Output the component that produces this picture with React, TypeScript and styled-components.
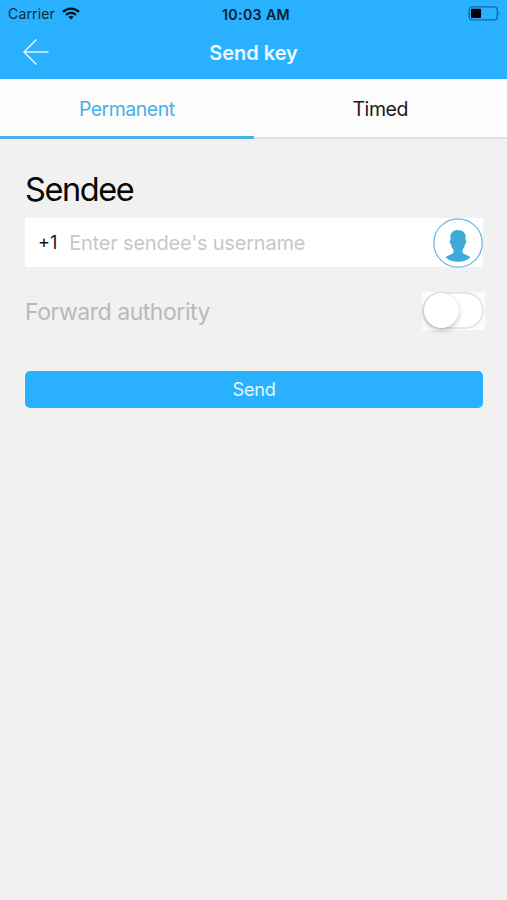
import React from "react";
import styled, { createGlobalStyle } from "styled-components";

const Global = createGlobalStyle`
  * { box-sizing: border-box; }
  body { margin: 0; background: #f1f1f1; }
  button { border: 0; padding: 0; background: none; font: inherit; }
`;

const Screen = styled.div`
  width: 507px;
  height: 900px;
  display: flex;
  flex-direction: column;
  overflow: hidden;
  background: #f1f1f1;
  font-family: Inter, "Liberation Sans", sans-serif;
`;

const Label = styled.span<{ $size: number; $track?: number; $weight?: number; $color?: string }>`
  font-size: ${(p) => p.$size}px;
  letter-spacing: ${(p) => p.$track ?? 0}px;
  font-weight: ${(p) => p.$weight ?? 400};
  color: ${(p) => p.$color ?? "#080808"};
  white-space: nowrap;
`;

const Header = styled.header`
  flex: none;
  height: 79px;
  background: #29b1ff;
`;

const StatusBar = styled.div`
  height: 27px;
  padding: 0 6px 0 8px;
  display: grid;
  grid-template-columns: 1fr auto 1fr;
  align-items: center;
`;

const Clock = styled.div`
  padding-left: 3px;
`;

const Carrier = styled.div`
  display: flex;
  align-items: center;
  gap: 7px;
`;

const Battery = styled.svg`
  justify-self: end;
`;

const NavBar = styled.div`
  height: 52px;
  padding: 0 22px;
  display: grid;
  grid-template-columns: 1fr auto 1fr;
  align-items: center;
`;

const BackButton = styled.button`
  display: flex;
  justify-self: start;
  padding-bottom: 2px;
`;

const Tabs = styled.nav`
  flex: none;
  height: 60px;
  display: flex;
  background: linear-gradient(#fcfcfc 58px, #e4e4e4 58px);
`;

const Tab = styled.button<{ $active?: boolean }>`
  flex: 1;
  height: 60px;
  display: flex;
  align-items: center;
  justify-content: center;
  padding-top: 2px;
  border-bottom: 3px solid ${(p) => (p.$active ? "#4db1e8" : "transparent")};
`;

const Form = styled.main`
  padding: 31px 24px 0 25px;
  display: flex;
  flex-direction: column;
`;

const Title = styled.h1`
  margin: 0;
  height: 48px;
  line-height: 40px;
  font-weight: 400;
`;

const Field = styled.div`
  height: 49px;
  padding-left: 13px;
  display: flex;
  align-items: center;
  background: #fff;
`;

const Placeholder = styled.div`
  flex: 1;
  margin-left: 12px;
`;

const AuthorityRow = styled.div`
  height: 38px;
  margin: 25px -2px 0 0;
  display: flex;
  align-items: center;
  justify-content: space-between;
`;

const AuthorityText = styled.div`
  padding-top: 2px;
`;

const SwitchBacking = styled.div`
  width: 63px;
  height: 38px;
  background: #fcfcfc;
`;

const Switch = styled.button`
  display: block;
  width: 62px;
  height: 37px;
  border: 2px solid #e6e6e6;
  border-radius: 19px;
  background: #fff;
`;

const Knob = styled.span`
  display: block;
  width: 35px;
  height: 35px;
  margin-top: -1px;
  border-radius: 50%;
  background: #fff;
  box-shadow: 0 3px 5px rgba(0, 0, 0, 0.18), 0 0 2px rgba(0, 0, 0, 0.12);
`;

const SendButton = styled.button`
  height: 37px;
  margin-top: 41px;
  padding-bottom: 1px;
  display: flex;
  align-items: center;
  justify-content: center;
  border-radius: 5px;
  background: #29b1ff;
`;

export default function App() {
  return (
    <Screen>
      <Global />
      <Header>
        <StatusBar>
          <Carrier>
            <Label $size={14} $track={0.15} $color="#0b2b40">Carrier</Label>
            <svg width="18" height="13" viewBox="0 0 18 13" fill="none" stroke="#06141e" strokeWidth="2.3">
              <path d="M1 4.9C5.6 .5 12.4 .5 17 4.9" />
              <path d="M4 8C6.8 5.2 11.2 5.2 14 8" />
              <path d="M6.4 9.900C7.900 8.500 10.100 8.500 11.600 9.900L9 12.600Z" fill="#06141e" stroke="none" />
            </svg>
          </Carrier>
          <Clock><Label $size={14.2} $track={0.35} $weight={600} $color="#06202f">10:03 AM</Label></Clock>
          <Battery width="33" height="15" viewBox="0 0 33 15">
            <rect x="1.3" y=".9" width="28" height="13" rx="3.2" fill="none" stroke="#176b9b" strokeWidth="1.4" />
            <rect x="3" y="2.8" width="10" height="9.2" rx="1" fill="#000" />
            <path d="M30.6 5Q32.8 7.4 30.6 9.8Z" fill="#176b9b" />
          </Battery>
        </StatusBar>
        <NavBar>
          <BackButton aria-label="Back">
            <svg width="28" height="28" viewBox="0 0 28 28" fill="none" stroke="#e0f6ff" strokeWidth="1.5">
              <path d="M26.5 14H1.5M14.5 1.5L2 14L14.5 26.5" />
            </svg>
          </BackButton>
          <Label $size={20} $weight={600} $color="#eefaff">Send key</Label>
          <span />
        </NavBar>
      </Header>
      <Tabs>
        <Tab $active><Label $size={19.5} $track={-0.5} $color="#45b0ea">Permanent</Label></Tab>
        <Tab><Label $size={19.5} $track={-0.4} $color="#1a1a1a">Timed</Label></Tab>
      </Tabs>
      <Form>
        <Title><Label $size={32.5} $track={-1.4}>Sendee</Label></Title>
        <Field>
          <Label $size={18} $track={0} $color="#181818">+1</Label>
          <Placeholder><Label $size={20} $track={-0.2} $color="#c7c7ca">Enter sendee's username</Label></Placeholder>
          <svg width="50" height="50" viewBox="0 0 50 50">
            <circle cx="25" cy="25" r="24.2" fill="#fff" stroke="#6bb9e3" strokeWidth="1.3" />
            <path fill="#40a9dc" d="M25 12C29.8 12 32.8 15 32.6 19.5L32.5 22.3C33.7 22.2 33.5 25.4 32 26.5C31.5 29 30.6 30.5 29.6 31.7V34.8C31.2 36.7 35.5 37.3 37.5 39.2C34.3 42.2 30 43.8 25 43.8C20 43.8 15.7 42.2 12.5 39.2C14.5 37.3 18.8 36.7 20.4 34.8V31.7C19.4 30.5 18.5 29 18 26.5C16.5 25.4 16.3 22.2 17.5 22.3L17.4 19.5C17.2 15 20.2 12 25 12Z" />
          </svg>
        </Field>
        <AuthorityRow>
          <AuthorityText>
            <Label $size={23} $track={-0.46} $color="#b9b9b5">Forward authority</Label>
          </AuthorityText>
          <SwitchBacking>
            <Switch role="switch" aria-checked={false} aria-label="Forward authority"><Knob /></Switch>
          </SwitchBacking>
        </AuthorityRow>
        <SendButton><Label $size={18.2} $track={-0.3} $color="#e6f7ff">Send</Label></SendButton>
      </Form>
    </Screen>
  );
}
